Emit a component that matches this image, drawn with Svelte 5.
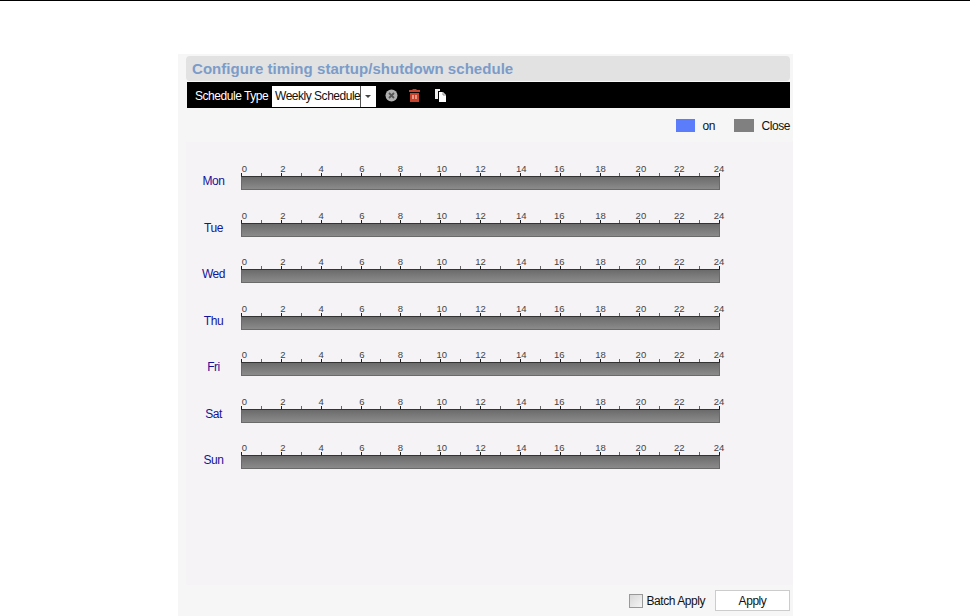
<script lang="ts">
	const days = ['Mon', 'Tue', 'Wed', 'Thu', 'Fri', 'Sat', 'Sun'];
	const hours = Array.from({ length: 25 }, (_, i) => i);
	const hourWidth = 19.92;
	// label centres drift a little from their ticks in the original widget
	const labelOffset: Record<number, number> = {
		0: 3, 2: 1.500, 4: 0, 6: 1, 8: -0.500, 10: 1, 12: 0, 14: 1, 16: -1, 18: 0.500, 20: 1, 22: -0.500, 24: -0.500
	};
</script>

<div class="topline"></div>

<div class="panel">
	<div class="title">Configure timing startup/shutdown schedule</div>

	<div class="toolbar">
		<span class="type-label">Schedule Type</span>
		<div class="select">
			<span class="select-value">Weekly Schedule</span>
			<span class="select-arrow"></span>
		</div>
		<svg class="icon" width="13" height="13" viewBox="0 0 13 13">
			<circle cx="6.500" cy="6.500" r="6" fill="#b0b0b0" />
			<path d="M4 4l5 5M9 4l-5 5" stroke="#555" stroke-width="1.800" />
		</svg>
		<svg class="icon trash" width="11" height="13" viewBox="0 0 11 13">
			<path d="M3.500 0h4v1h3.500v2H0V1h3.500z" fill="#c8412a" />
			<path d="M1 4h9v9H1z" fill="#c8412a" />
			<path d="M4 6v4M7 6v4" stroke="#f3d5c8" stroke-width="1.200" />
		</svg>
		<svg class="icon" width="13" height="13" viewBox="0 0 13 13">
			<path d="M1 0h5v2H4v8H1z" fill="#eee" />
			<path d="M5 3h4l3 3v7H5z" fill="#fff" />
			<path d="M9 3v3h3" fill="none" stroke="#777" stroke-width="0.800" />
		</svg>
	</div>

	<div class="legend">
		<span class="swatch on"></span>
		<span class="legend-on">on</span>
		<span class="swatch off"></span>
		<span>Close</span>
	</div>

	<div class="chart">
		{#each days as day}
			<div class="row">
				<span class="day">{day}</span>
				<svg class="ruler" width="486" height="32" viewBox="0 0 486 32">
					<defs>
						<linearGradient id="bar-{day}" x1="0" y1="0" x2="0" y2="1">
							<stop offset="0" stop-color="#6a6a6a" />
							<stop offset="1" stop-color="#8c8c8c" />
						</linearGradient>
					</defs>
					{#each hours as h}
						{#if h % 2 === 0}
							<text x={0.500 + h * hourWidth + labelOffset[h]} y="10" class="hour">{h}</text>
						{/if}
						<line
							x1={Math.round(h * hourWidth) + 0.500}
							x2={Math.round(h * hourWidth) + 0.500}
							y1="11"
							y2="15"
							stroke={h % 2 === 0 ? '#222' : '#666'}
						/>
					{/each}
					<rect x="0.500" y="14.500" width="478" height="13" fill="url(#bar-{day})" stroke="#6a6a6a" />
					<line x1="0" x2="479" y1="14.500" y2="14.500" stroke="#333" />
				</svg>
			</div>
		{/each}
	</div>

	<div class="footer">
		<label class="batch">
			<input type="checkbox" />
			<span>Batch Apply</span>
		</label>
		<button class="apply">Apply</button>
	</div>
</div>

<style>
	:global(body) {
		background: #fff;
		font-family: 'Liberation Sans', Arial, sans-serif;
		overflow: hidden;
	}

	.topline {
		height: 1px;
		background: #000;
		margin-bottom: 53px;
	}

	.panel {
		width: 615px;
		height: 562px;
		margin-left: 178px;
		background: #f6f6f6;
		box-sizing: border-box;
		padding-top: 2px;
		display: flex;
		flex-direction: column;
		font-size: 12px;
		letter-spacing: -0.450px;
		color: #111;
	}

	.title {
		margin: 0 3px 0 8px;
		height: 25px;
		line-height: 25px;
		background: #e2e2e2;
		border-radius: 4px;
		padding-left: 6px;
		font-size: 15px;
		font-weight: bold;
		letter-spacing: 0.050px;
		color: #7b9cc9;
	}

	.toolbar {
		margin: 1px 3px 0 9px;
		height: 26px;
		box-sizing: border-box;
		background: #000;
		display: flex;
		align-items: center;
		padding: 2px 0 0 8px;
		color: #fff;
	}

	.type-label {
		width: 77px;
		white-space: nowrap;
	}

	.select {
		width: 104px;
		height: 21px;
		background: #fff;
		color: #111;
		display: flex;
		align-items: center;
		margin-right: 9px;
	}

	.select-value {
		width: 89px;
		padding-left: 3px;
		box-sizing: border-box;
		white-space: nowrap;
		letter-spacing: -0.480px;
		border-right: 1px solid #555;
		line-height: 21px;
	}

	.select-arrow {
		margin-left: 4px;
		border: 3px solid transparent;
		border-top-color: #444;
		border-bottom: 0;
	}

	.icon {
		margin: -2px 11px 0 0;
	}

	.icon.trash {
		margin-right: 14px;
	}

	.legend {
		height: 34px;
		box-sizing: border-box;
		padding: 1px 3px 0 0;
		display: flex;
		align-items: center;
		justify-content: flex-end;
	}

	.swatch {
		height: 13px;
		width: 20px;
	}

	.swatch.on {
		background: #5b7dfb;
		width: 19px;
	}

	.swatch.off {
		background: #808080;
		margin-right: 8px;
	}

	.legend-on {
		width: 39px;
		padding-left: 8px;
		box-sizing: border-box;
	}

	.chart {
		margin-left: 8px;
		height: 443px;
		background: #f5f3f5;
		padding-top: 20px;
		box-sizing: border-box;
	}

	.row {
		height: 46.500px;
		display: flex;
		align-items: flex-start;
	}

	.day {
		width: 55px;
		padding-top: 12px;
		text-align: center;
		color: #14149a;
	}

	.ruler {
		display: block;
	}

	.hour {
		font-size: 9.500px;
		letter-spacing: 0;
		fill: #444;
		text-anchor: middle;
		font-family: 'Liberation Sans', Arial, sans-serif;
	}

	.footer {
		flex: 1;
		display: flex;
		align-items: center;
		justify-content: flex-end;
		padding-right: 3px;
	}

	.batch {
		display: flex;
		align-items: center;
		margin-right: 10px;
	}

	.batch input {
		appearance: none;
		box-sizing: border-box;
		width: 14px;
		height: 14px;
		margin: 0 4px 0 0;
		border: 1px solid #999;
		background: linear-gradient(135deg, #d8d8d8, #f5f5f5);
	}

	.apply {
		width: 75px;
		height: 21px;
		padding: 0;
		border: 1px solid #ccc;
		background: #fff;
		font: inherit;
		letter-spacing: inherit;
		color: #111;
	}
</style>
